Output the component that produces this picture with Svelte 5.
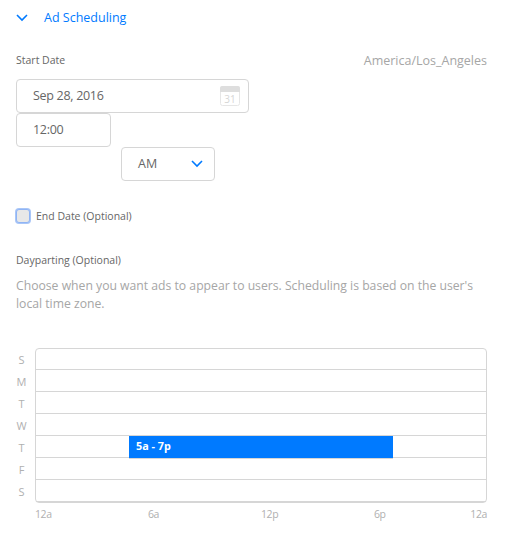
<script>
  const days = ['S', 'M', 'T', 'W', 'T', 'F', 'S'];
  const hours = ['12a', '6a', '12p', '6p', '12a'];
  const slot = { day: 4, from: 5, to: 19, label: '5a - 7p' };
</script>

<div class="page">
  <div class="section-head">
    <svg width="12" height="8" viewBox="0 0 12 8" fill="none" stroke="#007aff" stroke-width="1.6"><path d="M1 1l5 5 5-5" /></svg>
    <span>Ad Scheduling</span>
  </div>

  <div class="start-row">
    <span class="label">Start Date</span>
    <span class="zone">America/Los_Angeles</span>
  </div>

  <div class="field date">
    <span class="num">Sep 28, 2016</span>
    <svg class="cal" width="20" height="20" viewBox="0 0 20 20" fill="none">
      <rect x="0.5" y="0.5" width="19" height="19" rx="2" fill="#fff" stroke="#e6e6e6" />
      <path d="M0 6V2a2 2 0 0 1 2-2h16a2 2 0 0 1 2 2v4z" fill="#dedede" />
      <text x="10" y="17" text-anchor="middle" class="cal-num">31</text>
    </svg>
  </div>
  <div class="field time"><span class="num">12:00</span></div>
  <div class="field ampm">
    <span>AM</span>
    <svg class="caret" width="12" height="8" viewBox="0 0 12 8" fill="none" stroke="#007aff" stroke-width="1.6"><path d="M1 1l5 5 5-5" /></svg>
  </div>

  <label class="end">
    <span class="box"></span>
    <span class="label">End Date (Optional)</span>
  </label>

  <div class="label daypart">Dayparting (Optional)</div>
  <p class="hint">Choose when you want ads to appear to users. Scheduling is based on the user's local time zone.</p>

  <div class="chart">
    <div class="days">
      {#each days as d}
        <span>{d}</span>
      {/each}
    </div>
    <div class="grid">
      {#each days as d}
        <div class="row"></div>
      {/each}
      <div
        class="slot"
        style="left: calc({(slot.from / 24) * 100}% - 0.75px); width: calc({((slot.to - slot.from) / 24) * 100}% + 1.5px); top: {slot.day * 22 - 2}px"
      >
        {slot.label}
      </div>
    </div>
    <div class="hours">
      {#each hours as h}
        <span>{h}</span>
      {/each}
    </div>
  </div>
</div>

<style>
  :global(body) {
    margin: 0;
    background: #fff;
    font-family: 'Open Sans', 'Noto Sans', sans-serif;
  }

  .page {
    width: 519px;
    height: 540px;
    box-sizing: border-box;
    padding: 8px 32px 0 16px;
    overflow: hidden;
  }

  .section-head {
    display: flex;
    align-items: center;
    gap: 16px;
    height: 19px;
    color: #007aff;
    font-size: 12.5px;
  }

  .start-row {
    display: flex;
    justify-content: space-between;
    align-items: center;
    margin-top: 23px;
    height: 20px;
  }

  .label {
    font-size: 10.5px;
    color: #666;
  }

  .zone {
    font-size: 12.5px;
    color: #a6a6a6;
  }

  .field {
    box-sizing: border-box;
    height: 34px;
    display: flex;
    align-items: center;
    justify-content: space-between;
    border: 1px solid #d6d6d6;
    border-radius: 4px;
    font-size: 12.5px;
    color: #666;
    padding: 0 0 2px 16px;
  }

  .num {
    letter-spacing: -0.3px;
  }

  .date {
    width: 233px;
    margin-top: 9px;
    padding-right: 8px;
  }

  .cal {
    margin-bottom: -2px;
  }

  .cal-num {
    font-size: 10px;
    fill: #d6d6d6;
  }

  .time {
    width: 95px;
  }

  .ampm {
    width: 94px;
    margin-left: 105px;
    padding-right: 11px;
  }

  .caret {
    margin-bottom: -2px;
  }

  .end {
    display: flex;
    align-items: center;
    gap: 6px;
    margin-top: 28px;
    height: 14px;
  }

  .box {
    box-sizing: border-box;
    width: 14px;
    height: 14px;
    background: #e8e8e8;
    border: 1px solid #8fb4f5;
    border-radius: 3px;
    box-shadow: 0 0 0 1px #a9c6f7;
  }

  .daypart {
    margin-top: 30px;
  }

  .hint {
    margin: 10px 0 0;
    font-size: 12.2px;
    line-height: 18px;
    color: #a6a6a6;
  }

  .chart {
    display: grid;
    grid-template-columns: 19px 1fr;
    margin-top: 35px;
  }

  .days {
    display: flex;
    flex-direction: column;
    padding-top: 1px;
    padding-right: 8px;
  }

  .days span {
    height: 22px;
    line-height: 22px;
    text-align: center;
    font-size: 11px;
    color: #b0b0b0;
  }

  .grid {
    position: relative;
    box-sizing: border-box;
    height: 155px;
    border: 1px solid #d6d6d6;
    border-radius: 4px;
  }

  .row {
    box-sizing: border-box;
    height: 22px;
    border-bottom: 1px solid #d6d6d6;
  }

  .row:first-child {
    height: 21px;
  }

  .row:last-of-type {
    border-bottom: 0;
  }

  .slot {
    position: absolute;
    box-sizing: border-box;
    height: 24px;
    line-height: 20px;
    padding-left: 7px;
    background: #007aff;
    border: 1px solid #d6d6d6;
    border-width: 1px 0;
    color: #fff;
    font-size: 10.8px;
    font-weight: 700;
  }

  .hours {
    grid-column: 2;
    display: flex;
    margin-top: 4px;
    font-size: 10.5px;
    letter-spacing: -0.4px;
    color: #b0b0b0;
  }

  .hours span {
    flex: 1;
    min-width: 0;
  }

  /* last tick label hangs left from the right edge */
  .hours span:last-child {
    flex: 0 0 0;
    display: flex;
    justify-content: flex-end;
  }
</style>
